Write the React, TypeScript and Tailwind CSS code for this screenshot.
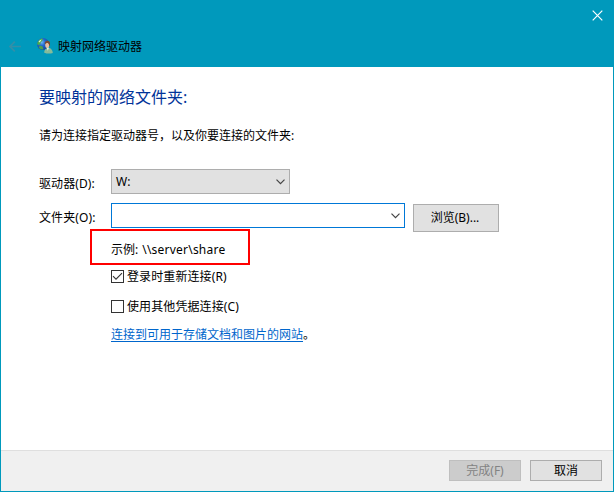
import type { ReactNode } from "react";

function Chevron() {
  return (
    <svg width="9" height="6" viewBox="0 0 9 6" fill="none" stroke="#444" strokeWidth="1.2" className="shrink-0">
      <path d="M0.5 0.7 L4.5 4.7 L8.5 0.7" />
    </svg>
  );
}

function ConnectionIcon() {
  return (
    <svg width="16" height="16" viewBox="0 0 16 16" className="shrink-0">
      <defs>
        <radialGradient id="globe" cx="0.4" cy="0.35" r="0.7">
          <stop offset="0" stopColor="#6fb8f5" />
          <stop offset="0.4" stopColor="#2369cf" />
          <stop offset="1" stopColor="#12409a" />
        </radialGradient>
      </defs>
      <circle cx="6" cy="6" r="6" fill="url(#globe)" />
      <path d="M0.4 4.4 Q1.6 1.2 5 0.3 L6 1.2 L5 3.2 L3.6 4 L3.4 6 L2 7 L0.3 6.4Z" fill="#4cae4a" />
      <path d="M2.6 7.6 L5.4 8.2 L6.6 11.6 Q3.8 11.8 1.8 10Z" fill="#4f9e52" />
      <path d="M1.6 3.6 Q2.6 1.8 4.6 1.4 L3.6 3.2 L2.2 4.6Z" fill="#e8f8dc" />
      <path d="M7 14.4 Q7.4 11.2 9.8 10 L12.6 10 Q15.6 11.4 15.8 15 Q11 16.4 7 14.4Z" fill="#86bb9a" />
      <path d="M9.8 9.6 L10.8 12.8 L12 9.6Z" fill="#f1f6f0" />
      <ellipse cx="10.2" cy="7" rx="2" ry="3" fill="#e8c0a2" />
      <path d="M7.6 5.6 Q7.8 2.8 10.6 2.8 Q13.4 3 13 6.8 L12.2 8.4 Q12.2 5.6 10.8 5 Q9 4.8 8.2 6.2Z" fill="#7a4a34" />
    </svg>
  );
}

function Checkbox({ checked = false, children }: { checked?: boolean; children: ReactNode }) {
  return (
    <div className="flex h-[13px] items-center">
      <span className="flex size-[13px] shrink-0 items-center justify-center border border-[#333] bg-white">
        {checked && (
          <svg width="11" height="11" viewBox="0 0 11 11" fill="none" stroke="#333" strokeWidth="1.1">
            <path d="M1 5.2 L4 8.2 L10 2.2" />
          </svg>
        )}
      </span>
      <span className="ml-[3px] tracking-[0.1px]">{children}</span>
    </div>
  );
}

export default function App() {
  return (
    <div className="flex h-[492px] w-[614px] flex-col overflow-hidden whitespace-nowrap bg-[#0099bc] px-px pb-px font-['Noto_Sans','Noto_Sans_CJK_SC',sans-serif] text-[12px] leading-4 text-black">
      <header className="flex h-[67px] shrink-0 flex-col">
        <div className="flex h-[30px] items-center justify-end pr-2.5">
          <svg width="11" height="11" viewBox="0 0 11 11" stroke="#fff" strokeWidth="1.2">
            <path d="M0.7 0.7 L10.3 10.3 M10.3 0.7 L0.7 10.3" />
          </svg>
        </div>
        <div className="flex h-8 items-center pl-2">
          <svg width="12" height="11" viewBox="0 0 12 11" fill="none" stroke="#328fa8" strokeWidth="1.7">
            <path d="M12 5.5 H1 M5.8 0.7 L1 5.5 L5.8 10.3" />
          </svg>
          <span className="ml-4 flex">
            <ConnectionIcon />
          </span>
          <span className="ml-[5px] pt-0.5">映射网络驱动器</span>
        </div>
      </header>

      <main className="flex flex-1 flex-col bg-white pl-[38px]">
        <h1 className="mt-[18px] text-[16px] leading-6 text-[#003399]">要映射的网络文件夹:</h1>
        <p className="mt-[19px]">请为连接指定驱动器号，以及你要连接的文件夹:</p>
        <div className="mt-[25px] flex h-[25px]">
          <span className="w-[72px] pt-[7px] tracking-[0.1px]">驱动器(D):</span>
          <div className="flex w-[179px] items-center justify-between border border-[#adadad] bg-[#e1e1e1] pr-1 pl-1">
            <span>W:</span>
            <Chevron />
          </div>
        </div>
        <div className="mt-[9px] flex h-[26px] items-start">
          <span className="w-[72px] pt-[7px] tracking-[0.1px]">文件夹(O):</span>
          <div className="flex h-[25px] w-[294px] items-center justify-end border border-[#0078d7] bg-white pr-1">
            <Chevron />
          </div>
          <button className="mt-px ml-2 h-7 w-[86px] shrink-0 border border-[#adadad] bg-[#e1e1e1] pr-0.5">浏览(B)...</button>
        </div>
        <div className="ml-[51px] flex h-9 w-40 items-center border-2 border-[#ff0000] pt-[6px] pl-[19px]">
          <span>示例:</span>
          <span className="ml-1 tracking-[0.22px]">\\server\share</span>
        </div>
        <div className="mt-[5px] ml-[72px] flex flex-col gap-[17px]">
          <Checkbox checked>登录时重新连接(R)</Checkbox>
          <Checkbox>使用其他凭据连接(C)</Checkbox>
        </div>
        <p className="mt-3.5 ml-[72px]">
          <a className="text-[#0066cc] underline underline-offset-2">连接到可用于存储文档和图片的网站</a>。
        </p>
      </main>

      <footer className="flex h-[41px] shrink-0 justify-end gap-[9px] border-t border-[#dfdfdf] bg-[#f0f0f0] pt-[9px] pr-[11px]">
        <button className="h-[21px] w-[72px] border border-[#bfbfbf] bg-[#cccccc] text-[#838383]">完成(F)</button>
        <button className="h-[21px] w-[72px] border border-[#adadad] bg-[#e1e1e1]">取消</button>
      </footer>
    </div>
  );
}
